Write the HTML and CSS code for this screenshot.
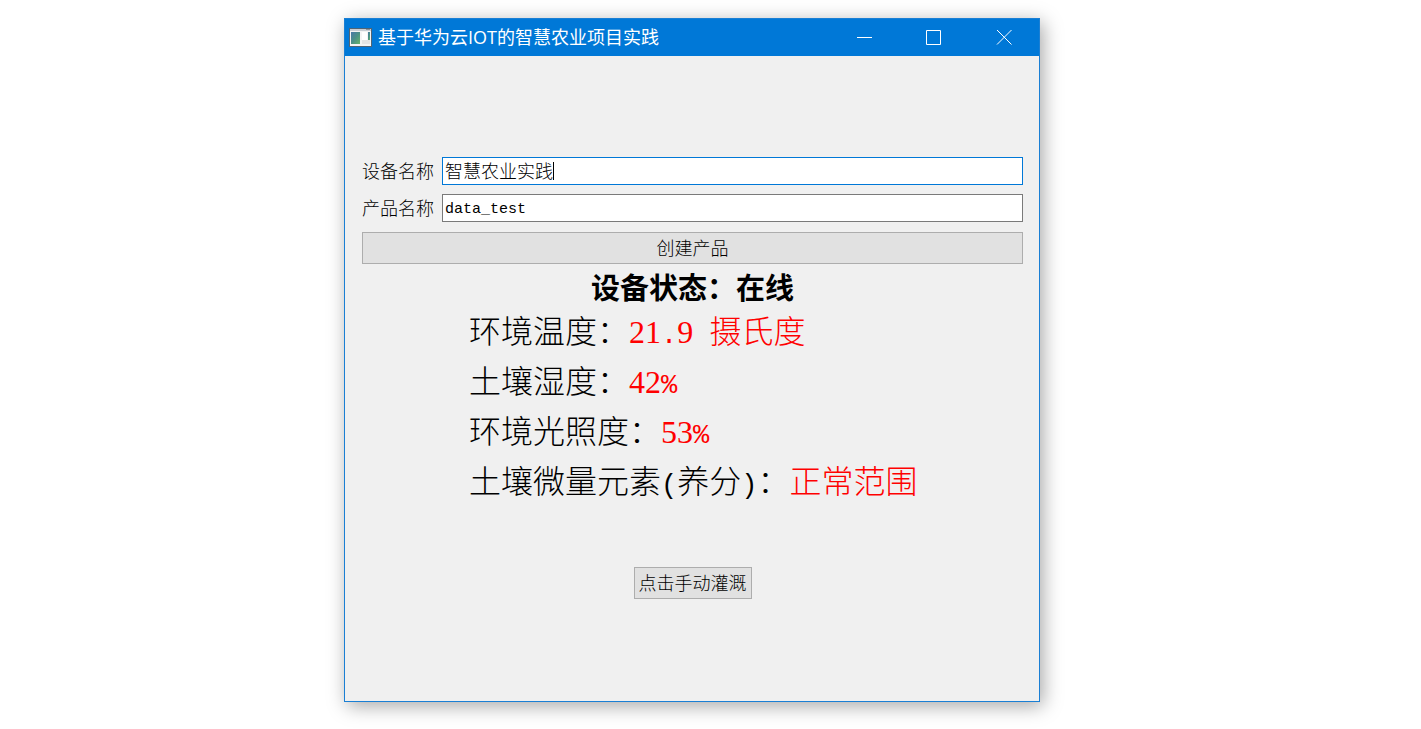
FILE: index.html
```html
<!DOCTYPE html>
<html lang="zh-CN">
<head>
    <meta charset="UTF-8">
    <meta name="viewport" content="width=device-width, initial-scale=1.0">
    <title>基于华为云IOT的智慧农业项目实践</title>
    <link rel="stylesheet" href="styles.css">
</head>
<body>
    <main class="window">
        <header class="title-bar">
            <svg class="app-icon" width="23" height="19" viewBox="0 0 23 19" aria-hidden="true">
                <defs>
                    <linearGradient id="pane" x1="0" y1="0" x2="1" y2="1">
                        <stop offset="0" stop-color="#4a78a8"/>
                        <stop offset="0.5" stop-color="#4b9186"/>
                        <stop offset="1" stop-color="#66b46a"/>
                    </linearGradient>
                </defs>
                <rect x="0.5" y="0.5" width="22" height="18" fill="#f4f4f4" stroke="#4f6475"/>
                <rect x="1" y="1" width="21" height="2" fill="#c9ced4"/>
                <rect x="17" y="1" width="4" height="1" fill="#8b939c"/>
                <rect x="2" y="4" width="9" height="12" fill="url(#pane)"/>
                <rect x="13" y="4" width="5" height="8" fill="#fff"/>
                <rect x="13" y="12" width="8" height="4" fill="#e4e4e4"/>
                <rect x="19" y="4" width="2" height="8" fill="url(#pane)"/>
            </svg>
            <h1 class="title">基于华为云IOT的智慧农业项目实践</h1>
            <div class="window-controls">
                <button type="button" class="control-btn" aria-label="最小化">
                    <svg width="16" height="16" viewBox="0 0 16 16"><path d="M1 8.5h15"/></svg>
                </button>
                <button type="button" class="control-btn" aria-label="最大化">
                    <svg width="16" height="16" viewBox="0 0 16 16"><path d="M0.5 1.5h14v14h-14z"/></svg>
                </button>
                <button type="button" class="control-btn" aria-label="关闭">
                    <svg width="16" height="16" viewBox="0 0 16 16"><path d="M1 1l14.5 14.5M15.5 1L1 15.5"/></svg>
                </button>
            </div>
        </header>

        <div class="content">
            <form class="product-form">
                <label for="device">设备名称</label>
                <div class="input-group active">
                    <input type="text" id="device" value="智慧农业实践">
                    <span class="caret"></span>
                </div>

                <label for="product">产品名称</label>
                <div class="input-group">
                    <input type="text" id="product" class="latin" value="data_test">
                </div>

                <button type="button" class="btn create-btn">创建产品</button>
            </form>

            <h2 class="status">设备状态：在线</h2>

            <ul class="readings">
                <li>环境温度：<span class="value"><span class="num">21</span><span class="sign">.</span><span class="num">9</span><span class="sign"> </span>摄氏度</span></li>
                <li>土壤湿度：<span class="value"><span class="num">42</span><span class="sign">%</span></span></li>
                <li>环境光照度：<span class="value"><span class="num">53</span><span class="sign">%</span></span></li>
                <li>土壤微量元素<span class="sign">(</span>养分<span class="sign">)</span>：<span class="value">正常范围</span></li>
            </ul>

            <button type="button" class="btn water-btn">点击手动灌溉</button>
        </div>
    </main>
</body>
</html>
```
FILE: styles.css
```css
* {
    margin: 0;
    padding: 0;
    box-sizing: border-box;
}

body {
    background: #fff;
    min-height: 100vh;
    display: flex;
    justify-content: center;
    padding: 18px 37px 27px 0;
    font-family: 'Noto Sans CJK SC', sans-serif;
    font-size: 18px;
    font-weight: 300;
    color: #000;
}

button,
input {
    font: inherit;
    color: inherit;
}

.window {
    width: 100%;
    max-width: 696px;
    display: flex;
    flex-direction: column;
    background: #f0f0f0;
    border: 1px solid #1a7fd4;
    box-shadow: 3px 4px 18px rgba(0, 0, 0, 0.35);
}

/* title bar */
.title-bar {
    display: flex;
    align-items: center;
    height: 37px;
    padding-left: 4px;
    background: #0078d7;
    color: #fff;
}

.title {
    flex: 1;
    margin-left: 6px;
    padding-bottom: 2px;
    font-family: 'Open Sans', 'Noto Sans CJK SC', sans-serif;
    font-size: 18px;
    font-weight: 400;
    line-height: 34px;
    white-space: nowrap;
}

.window-controls {
    display: flex;
}

.control-btn {
    width: 70px;
    height: 37px;
    display: flex;
    align-items: center;
    justify-content: center;
    padding-bottom: 2px;
    background: none;
    border: none;
}

.control-btn svg {
    fill: none;
    stroke: #fff;
}

/* content */
.content {
    flex: 1;
    display: flex;
    flex-direction: column;
    padding: 101px 16px 40px 17px;
}

.product-form {
    display: grid;
    grid-template-columns: auto 1fr;
    gap: 9px 8px;
    align-items: center;
    line-height: 26px;
}

.product-form label {
    padding-bottom: 2px;
}

.input-group {
    position: relative;
}

.input-group input {
    display: block;
    width: 100%;
    height: 28px;
    padding: 0 2px 2px;
    background: #fff;
    border: 1px solid #7a7a7a;
    outline: none;
}

.input-group.active input {
    border-color: #0078d7;
}

.input-group .latin {
    padding: 2px 2px 0;
    font-family: 'Liberation Mono', monospace;
    font-size: 15px;
}

/* text cursor after the six characters of the name */
.caret {
    position: absolute;
    left: 111px;
    top: 5px;
    width: 1px;
    height: 18px;
    background: #000;
}

.btn {
    height: 32px;
    padding: 0 4px 2px;
    line-height: 28px;
    background: #e1e1e1;
    border: 1px solid #adadad;
}

.create-btn {
    grid-column: 1 / -1;
    margin-top: 1px;
}

.status {
    margin-top: 4px;
    font-size: 29px;
    font-weight: 700;
    line-height: 36px;
    text-align: center;
}

.readings {
    margin-left: 107px;
    list-style: none;
    font-size: 32px;
    line-height: 50px;
    white-space: nowrap;
}

.readings li {
    height: 50px;
}

.num {
    font-family: 'Liberation Serif', serif;
}

/* punctuation in half-width cells */
.sign {
    font-family: 'Liberation Mono', monospace;
    font-size: 27px;
    white-space: pre;
}

.value {
    color: #f00;
}

.water-btn {
    align-self: center;
    margin-top: 63px;
}
```
